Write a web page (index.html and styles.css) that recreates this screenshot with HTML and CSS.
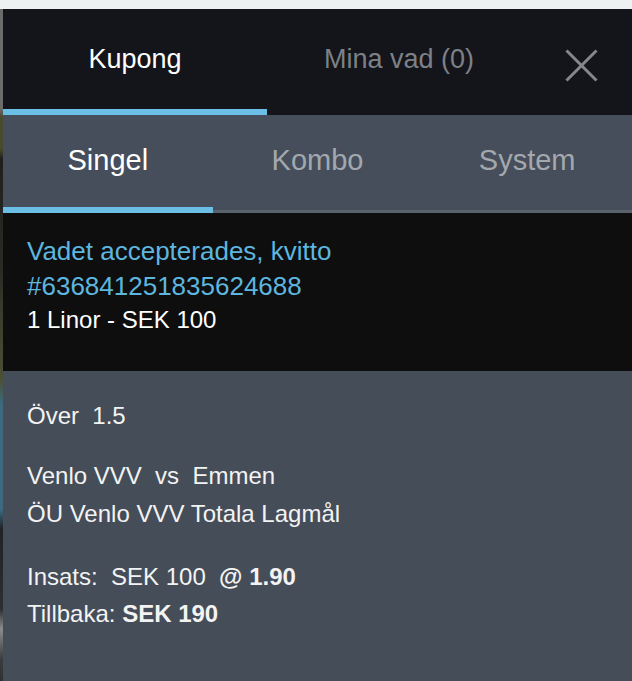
FILE: index.html
```html
<!DOCTYPE html>
<html lang="sv">
<head>
    <meta charset="UTF-8">
    <meta name="viewport" content="width=device-width, initial-scale=1.0">
    <title>Kupong</title>
    <link rel="stylesheet" href="styles.css">
</head>
<body>
    <div class="topbar"></div>
    <div class="main">
        <div class="backdrop"></div>
        <div class="panel">
            <div class="tabs">
                <div class="tab active">Kupong</div>
                <div class="tab">Mina vad (0)</div>
                <div class="close">
                    <svg width="33" height="33" viewBox="0 0 33 33">
                        <path d="M1.5 1.5 L31.5 31.5 M31.5 1.5 L1.5 31.5" stroke="#85878b" stroke-width="3" fill="none"/>
                    </svg>
                </div>
            </div>
            <div class="subtabs">
                <div class="subtab active">Singel</div>
                <div class="subtab">Kombo</div>
                <div class="subtab">System</div>
            </div>
            <div class="receipt">
                <div class="receipt-title">Vadet accepterades, kvitto<br>#636841251835624688</div>
                <div class="receipt-lines">1 Linor - SEK 100</div>
            </div>
            <div class="bet">
                <div class="pick">Över&nbsp; 1.5</div>
                <div class="match">
                    <div>Venlo VVV&nbsp; vs&nbsp; Emmen</div>
                    <div>ÖU Venlo VVV Totala Lagmål</div>
                </div>
                <div class="stake">
                    <div>Insats:&nbsp; SEK 100&nbsp; <b>@ 1.90</b></div>
                    <div>Tillbaka: <b>SEK 190</b></div>
                </div>
            </div>
        </div>
    </div>
</body>
</html>
```

FILE: styles.css
```css
* {
    box-sizing: border-box;
}
html, body {
    height: 100%;
}
body {
    margin: 0;
    font-family: "Liberation Sans", Arial, sans-serif;
    background-color: #edf1f2;
    display: flex;
    flex-direction: column;
}
.topbar {
    height: 9px;
    background-color: #edf1f2;
}
.main {
    flex: 1;
    display: flex;
}
.backdrop {
    width: 3px;
    background: linear-gradient(#6b6b6b 0, #6b6b6b 100px, #4a4a30 108px, #4a4a30 140px, #1f201c 150px, #2a2b25 260px, #3a3a2c 300px, #4b5034 370px, #3d6a80 395px, #3d6a80 500px, #202226 520px, #2c2e31 600px, #8a8c8e 620px, #3a3c3f 650px, #2a2c2e 681px);
}
.panel {
    flex: 1;
    display: flex;
    flex-direction: column;
    background-color: #454d59;
}
.tabs {
    display: flex;
    background-color: #13151a;
}
.tab {
    width: 264px;
    height: 106px;
    padding-top: 34px;
    text-align: center;
    font-size: 27px;
    line-height: 32px;
    color: #7d8187;
}
.tab.active {
    color: #ffffff;
    border-bottom: 6px solid #6bbfe6;
}
.close {
    flex: 1;
    display: flex;
    justify-content: center;
    padding-top: 40px;
}
.subtabs {
    display: flex;
    background-color: #454e5a;
    box-shadow: inset 0 -3px 0 #59616d;
}
.subtab {
    flex: 1;
    height: 98px;
    padding-top: 28px;
    text-align: center;
    font-size: 29px;
    line-height: 34px;
    color: #a3a8ae;
}
.subtab.active {
    color: #ffffff;
    border-bottom: 6px solid #6bbfe6;
}
.receipt {
    height: 158px;
    padding: 21px 24px 0;
    background-color: #0e0e0f;
    color: #ffffff;
}
.receipt-title {
    font-size: 26px;
    line-height: 35px;
    color: #5eb6df;
}
.receipt-lines {
    font-size: 24px;
    line-height: 32px;
}
.bet {
    flex: 1;
    padding: 26px 24px;
    font-size: 24px;
    color: #f3f3f3;
}
.pick {
    line-height: 37px;
    margin-bottom: 23px;
}
.match {
    line-height: 38px;
    margin-bottom: 25px;
}
.stake {
    line-height: 37px;
}
```
